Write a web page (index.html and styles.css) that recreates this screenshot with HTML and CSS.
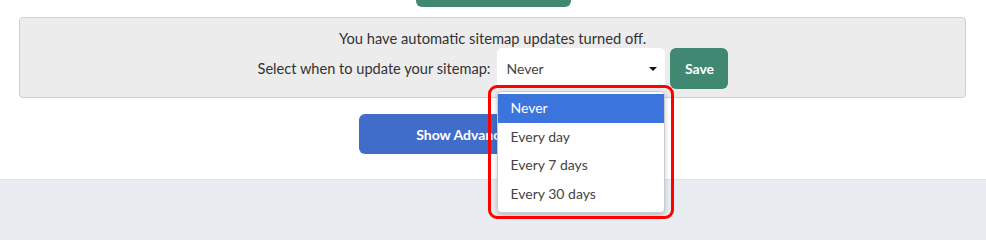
FILE: index.html
```html
<!DOCTYPE html>
<html>
<head>
<meta charset="utf-8">
<link rel="stylesheet" href="styles.css">
</head>
<body>
<div class="main">
  <div class="top-row"><div class="top-btn"></div></div>
  <div class="panel">
    <p class="notice">You have automatic sitemap updates turned off.</p>
    <div class="form-row">
      <label class="label">Select when to update your sitemap:</label>
      <div class="select-wrap">
        <div class="select">
          <span>Never</span>
          <span class="caret"></span>
        </div>
        <div class="highlight-box"></div>
        <ul class="dropdown">
          <li class="opt active">Never</li>
          <li class="opt">Every day</li>
          <li class="opt">Every 7 days</li>
          <li class="opt">Every 30 days</li>
        </ul>
      </div>
      <button class="save">Save</button>
    </div>
  </div>
  <div class="adv-row"><button class="adv">Show Advanced Options</button></div>
</div>
<div class="footer"></div>
</body>
</html>
```
FILE: styles.css
```css
* { box-sizing: border-box; }
html, body { margin: 0; padding: 0; }
body {
  width: 986px;
  height: 240px;
  overflow: hidden;
  background: #e9ecf1;
  font-family: Lato, "Open Sans", sans-serif;
  color: #333;
}
.main {
  background: #fff;
  height: 180px;
  border-bottom: 1px solid #dde1e6;
  padding: 0 20px 0 19px;
  display: flex;
  flex-direction: column;
}
.top-row {
  display: flex;
  justify-content: center;
  height: 17px;
}
.top-btn {
  width: 155px;
  height: 7px;
  background: #418873;
  border-radius: 0 0 6px 6px;
  margin-left: 1px;
}
.panel {
  background: #ececec;
  border: 1px solid #cfcfcf;
  border-radius: 4px;
  height: 81px;
  padding: 10px 0 0;
  display: flex;
  flex-direction: column;
  align-items: center;
}
.notice {
  margin: 0;
  font-size: 14.7px;
  line-height: 20px;
  height: 20px;
}
.form-row {
  display: flex;
  align-items: center;
  height: 40px;
  margin-left: 1px;
}
.label {
  font-size: 14.6px;
  margin-right: 7px;
}
.select-wrap {
  position: relative;
  width: 168px;
  height: 40px;
  margin-right: 5px;
}
.select {
  background: #fff;
  border-radius: 5px;
  height: 40px;
  display: flex;
  align-items: center;
  justify-content: space-between;
  padding: 0 8px 0 9px;
  font-size: 14px;
  color: #444;
}
.caret {
  width: 0;
  height: 0;
  border-left: 4px solid transparent;
  border-right: 4px solid transparent;
  border-top: 4px solid #111;
  margin-top: 1px;
}
.save {
  width: 58px;
  height: 41px;
  background: #418873;
  color: #fff;
  border: none;
  border-radius: 6px;
  font-family: inherit;
  font-weight: bold;
  font-size: 14px;
}
.dropdown {
  position: absolute;
  left: 0;
  top: 43px;
  width: 168px;
  margin: 0;
  padding: 2px 0 3px;
  list-style: none;
  background: #fff;
  border: 1px solid #c9ccd1;
  border-radius: 4px;
  box-shadow: 0 2px 5px rgba(0,0,0,0.22);
  z-index: 2;
}
.opt {
  height: 28.7px;
  line-height: 28.7px;
  padding-left: 12px;
  font-size: 14px;
  color: #444;
}
.opt.active {
  background: #3b74dd;
  color: #fff;
}
.highlight-box {
  position: absolute;
  left: -9px;
  top: 37px;
  width: 186px;
  height: 134px;
  border: 3px solid #f00;
  border-radius: 9px;
  z-index: 3;
}
.adv-row {
  display: flex;
  justify-content: center;
  padding-top: 16px;
}
.adv {
  width: 268px;
  height: 40px;
  background: #416dca;
  color: #fff;
  border: none;
  border-radius: 6px;
  font-family: inherit;
  font-weight: bold;
  font-size: 14px;
}
.footer { height: 60px; }
```
